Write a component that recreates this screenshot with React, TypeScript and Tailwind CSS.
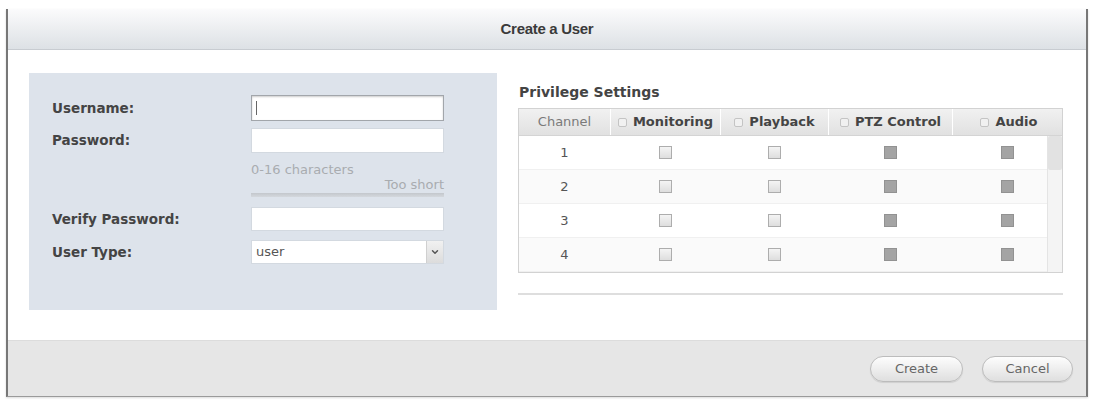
import { ChevronDown } from 'lucide-react';

const channels = [1, 2, 3, 4];

function Box({ disabled, small }: { disabled?: boolean; small?: boolean }) {
  if (small) {
    return <span className="inline-block w-[9px] h-[9px] rounded-[2px] border border-[#c4c4c4] bg-[#f1f1f1]" />;
  }
  return disabled ? (
    <span className="inline-block w-[13px] h-[13px] border border-[#929292] bg-[#a4a4a4]" />
  ) : (
    <span className="inline-block w-[13px] h-[13px] border border-[#adadad] bg-gradient-to-b from-[#f4f4f4] to-[#dedede]" />
  );
}

function HeadCell({ label, className }: { label: string; className: string }) {
  return (
    <div className={`flex items-center justify-center gap-[6px] border-l border-white ${className}`}>
      <Box small />
      <span className="font-bold text-[#444]">{label}</span>
    </div>
  );
}

export default function App() {
  return (
    <div className="w-[1095px] h-[401px] bg-white pt-[9px] pl-[6px] font-['DejaVu_Sans',sans-serif]">
      <div className="w-[1082px] h-[388px] flex flex-col border-x-2 border-b border-x-[#777] border-b-[#9a9a9a] shadow-[0_1px_2px_rgba(0,0,0,0.15)]">
        {/* Header */}
        <div className="h-[41px] shrink-0 flex items-center justify-center border-b border-[#c8ccd1] bg-gradient-to-b from-[#fbfbfc] to-[#dde1e5]">
          <span className="font-['Liberation_Sans',sans-serif] text-[15px] font-bold text-[#3a3a3a] tracking-[-0.3px]">Create a User</span>
        </div>

        {/* Body */}
        <div className="h-[290px] shrink-0 flex pl-[21px] pt-[23px] gap-[21px] bg-white">
          {/* Account panel */}
          <div className="w-[468px] h-[237px] bg-[#dde3eb] pl-[23px] pt-[22px] text-[13px]">
            <div className="grid grid-cols-[199px_193px] items-center">
              <span className="font-bold text-[13.5px] text-[#444]">Username:</span>
              <div className="h-[26px] flex items-center bg-white border border-[#a2a6ab] shadow-[inset_0_1px_2px_rgba(0,0,0,0.2)] pl-[4px]">
                <span className="w-[1px] h-[14px] bg-[#666]" />
              </div>

              <span className="mt-[7px] font-bold text-[13.5px] text-[#444]">Password:</span>
              <div className="mt-[7px] h-[25px] bg-white border border-[#d3d9e0]" />

              <span />
              <div className="flex flex-col">
                <span className="mt-[9px] h-[16px] leading-[16px] text-[#a9acb0]">0-16 characters</span>
                <span className="h-[14px] leading-[14px] text-right text-[#a9acb0]">Too short</span>
                <div className="mt-[1px] h-[4px] bg-gradient-to-b from-[#c3c7cc] to-[#d4d8dd]" />
              </div>

              <span className="mt-[10px] font-bold text-[13.5px] text-[#444]">Verify Password:</span>
              <div className="mt-[10px] h-[24px] bg-white border border-[#d3d9e0]" />

              <span className="mt-[9px] font-bold text-[13.5px] text-[#444]">User Type:</span>
              <div className="mt-[9px] h-[24px] flex bg-white border border-[#d3d9e0]">
                <span className="flex-1 pl-[4px] leading-[22px] text-[#555]">user</span>
                <span className="w-[17px] flex items-center justify-center bg-gradient-to-b from-[#f1f1f1] to-[#dcdcdc] border-l border-[#d0d0d0]">
                  <ChevronDown className="w-[10px] h-[10px] text-[#555]" strokeWidth={3.5} />
                </span>
              </div>
            </div>
          </div>

          {/* Privilege settings */}
          <div className="w-[545px] pt-[11px] text-[13px]">
            <div className="h-[16px] leading-[16px] font-bold text-[14px] text-[#444] pl-[1px] mb-[8px]">Privilege Settings</div>
            <div className="border border-[#d2d2d2]">
              <div className="h-[27px] flex bg-gradient-to-b from-[#f1f1f1] to-[#e1e1e1] border-b border-[#d4d4d4]">
                <div className="w-[91px] flex items-center justify-center text-[#7a7a7a]">Channel</div>
                <HeadCell label="Monitoring" className="w-[110px]" />
                <HeadCell label="Playback" className="w-[108px]" />
                <HeadCell label="PTZ Control" className="w-[124px]" />
                <HeadCell label="Audio" className="w-[95px] pl-[18px]" />
                <div className="w-[15px]" />
              </div>
              <div className="flex">
                <div className="flex flex-col">
                  {channels.map((c) => (
                    <div
                      key={c}
                      className={`h-[34px] flex items-center border-b border-[#f0f0f0] ${c % 2 === 0 ? 'bg-[#fafafa]' : 'bg-white'}`}
                    >
                      <div className="w-[91px] text-center text-[#555]">{c}</div>
                      <div className="w-[110px] flex justify-center"><Box /></div>
                      <div className="w-[108px] flex justify-center"><Box /></div>
                      <div className="w-[124px] flex justify-center"><Box disabled /></div>
                      <div className="w-[95px] flex justify-center pl-[16px]"><Box disabled /></div>
                    </div>
                  ))}
                </div>
                <div className="w-[15px] bg-[#f4f4f4] border-l border-[#e4e4e4]">
                  <div className="h-[34px] bg-[#e2e2e2] rounded-[2px]" />
                </div>
              </div>
            </div>
            <div className="mt-[20px] h-[2px] bg-[#dedede]" />
          </div>
        </div>

        {/* Footer */}
        <div className="flex-1 flex items-center justify-end gap-[19px] pr-[13px] bg-[#e6e6e6] border-t border-[#dcdcdc]">
          <button className="w-[93px] h-[26px] rounded-full border border-[#bcbcbc] bg-gradient-to-b from-[#fdfdfd] to-[#dfdfdf] text-[13px] text-[#666] shadow-[0_1px_1px_rgba(0,0,0,0.1)]">
            Create
          </button>
          <button className="w-[91px] h-[26px] rounded-full border border-[#bcbcbc] bg-gradient-to-b from-[#fdfdfd] to-[#dfdfdf] text-[13px] text-[#666] shadow-[0_1px_1px_rgba(0,0,0,0.1)]">
            Cancel
          </button>
        </div>
      </div>
    </div>
  );
}
